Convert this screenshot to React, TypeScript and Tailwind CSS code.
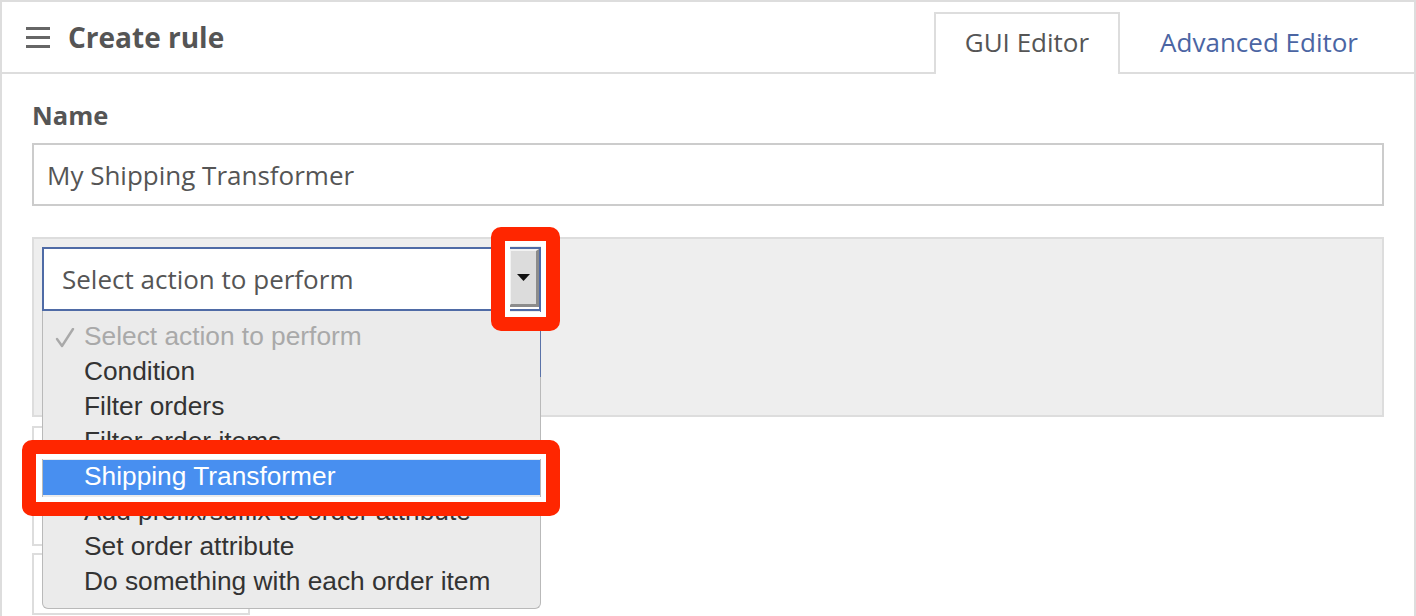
import React from "react";

const items: { label: string; kind: "disabled" | "normal" | "active" }[] = [
  { label: "Select action to perform", kind: "disabled" },
  { label: "Condition", kind: "normal" },
  { label: "Filter orders", kind: "normal" },
  { label: "Filter order items", kind: "normal" },
  { label: "Shipping Transformer", kind: "active" },
  { label: "Add prefix/suffix to order attribute", kind: "normal" },
  { label: "Set order attribute", kind: "normal" },
  { label: "Do something with each order item", kind: "normal" },
];

export default function App() {
  return (
    <div className="h-[616px] w-[1416px] overflow-hidden bg-white font-['Open_Sans',sans-serif]">
      <div className="h-[700px] border-2 border-b-0 border-[#dddddd] bg-white">
        {/* Header */}
        <div className="flex h-[72px] items-stretch justify-between border-b-2 border-[#dddddd]">
          <div className="flex items-center pl-[24px]">
            <svg width="24" height="21" viewBox="0 0 24 21" className="block">
              <rect x="0" y="0" width="24" height="3" fill="#666666" />
              <rect x="0" y="9" width="24" height="3" fill="#666666" />
              <rect x="0" y="18" width="24" height="3" fill="#666666" />
            </svg>
            <h1 className="ml-[18px] text-[28px] font-bold leading-[38px] text-[#555555]">
              Create rule
            </h1>
          </div>
          <div className="mb-[-2px] flex items-end self-end pr-[24px]">
            <div className="h-[62px] border-2 border-b-0 border-[#dddddd] bg-white px-[29px] pt-[10px] text-[26px] leading-[36px] text-[#555555]">
              GUI Editor
            </div>
            <div className="ml-[8px] h-[62px] border-2 border-b-0 border-transparent px-[30px] pt-[10px] text-[26px] leading-[36px] text-[#4b65a3]">
              Advanced Editor
            </div>
          </div>
        </div>

        {/* Content */}
        <div className="px-[30px] pt-[23px]">
          <div className="h-[36px] text-[25.5px] font-bold leading-[36px] text-[#555555]">Name</div>
          <div className="mt-[10px] flex h-[63px] items-center border-2 border-[#cccccc] bg-white px-[13px] text-[26px] leading-[36px] text-[#555555]">
            My Shipping Transformer
          </div>

          <div className="mt-[31px] h-[180px] border-2 border-[#dddddd] bg-[#eeeeee] p-[8px]">
            <div className="relative w-[499px]">
              {/* Select */}
              <div className="flex h-[64px] border-2 border-[#4f6ba6] bg-white">
                <div className="flex flex-1 items-center pl-[18px] text-[26px] leading-[36px] text-[#555555]">
                  Select action to perform
                </div>
                <div className="flex h-[58px] w-[31px] items-center justify-center border-b-[3px] border-l-[3px] border-r-[3px] border-t-[2px] border-b-[#8c8c8c] border-l-[#f2f2f2] border-r-[#8c8c8c] border-t-[#f2f2f2] bg-[#dcdcdc]">
                  <svg width="13" height="7" viewBox="0 0 13 7" className="block">
                    <polygon points="0,0 13,0 6.5,7" fill="#111111" />
                  </svg>
                </div>
              </div>

              {/* Dropdown popup */}
              <div className="absolute left-0 top-full z-10 w-full rounded-b-[6px] border border-t-0 border-[#b9b9b9] bg-[#ebebeb] pb-[8px] pt-[9px] font-['Liberation_Sans',Arial,sans-serif]">
                <div className="absolute right-[-1px] top-0 h-[66px] w-[1px] bg-[#5a72a8]" />
                {items.map((it) => (
                  <div
                    key={it.label}
                    className={
                      "relative h-[35px] whitespace-nowrap pl-[41px] text-[26.3px] leading-[33px] " +
                      (it.kind === "active"
                        ? "bg-[#488ff0] text-white"
                        : it.kind === "disabled"
                        ? "text-[#a9a9a9]"
                        : "text-[#333333]")
                    }
                  >
                    {it.kind === "disabled" && (
                      <svg
                        width="20"
                        height="20"
                        viewBox="0 0 20 20"
                        className="absolute left-[12px] top-[8px] block"
                      >
                        <path
                          d="M2 11 L7 18 L18 1"
                          fill="none"
                          stroke="#a9a9a9"
                          strokeWidth="2.4"
                          strokeLinecap="round"
                          strokeLinejoin="round"
                        />
                      </svg>
                    )}
                    {it.label}
                  </div>
                ))}
              </div>

              {/* Red highlight boxes */}
              <div className="absolute left-[449px] top-[-20px] z-20 h-[104px] w-[69px] rounded-[10px] border-[14px] border-[#ff2600] shadow-[inset_0_0_0_5px_#ffffff]" />
              <div className="absolute left-[-20px] top-[193px] z-20 h-[76px] w-[538px] rounded-[10px] border-[14px] border-[#ff2600] shadow-[inset_0_0_0_5px_#ffffff]" />
            </div>
          </div>

          {/* Elements behind the dropdown */}
          <div className="mt-[9px] h-[120px] w-[300px] border-2 border-[#dddddd] bg-white" />
          <div className="mt-[7px] h-[62px] w-[218px] border-2 border-[#dddddd] bg-white" />
        </div>
      </div>
    </div>
  );
}
